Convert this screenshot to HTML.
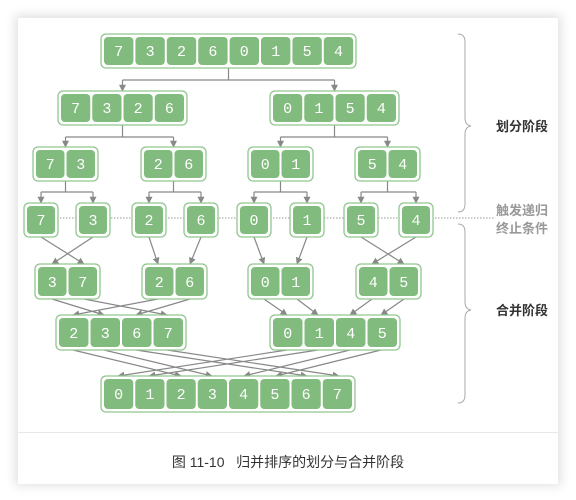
<!DOCTYPE html>
<html><head><meta charset="utf-8"><style>
html,body{margin:0;padding:0;background:#fff;width:576px;height:500px;overflow:hidden}
.card{position:absolute;left:18px;top:18px;width:540px;height:465px;background:#fff;box-shadow:0 0 10px 3px rgba(0,0,0,.12)}
.cap{position:absolute;left:0;top:414px;width:540px;height:51px;border-top:1px solid #e8e8e8;background:#fff;text-align:center;font:14px "Liberation Sans","Noto Sans CJK SC",sans-serif;color:#333;line-height:58px}
svg{position:absolute;left:0;top:0}
.o{fill:#fff;stroke:#92c68e;stroke-width:1.3}
.c{fill:#82bb7e}
.t{font:15px "Liberation Mono",monospace;fill:#fff;text-anchor:middle}
.l{stroke:#888;stroke-width:1.2;fill:none}
</style></head><body>
<div class="card"><div class="cap">图 11-10&nbsp;&nbsp;&nbsp;归并排序的划分与合并阶段</div></div>
<svg width="576" height="500" viewBox="0 0 576 500">
<defs><marker id="a" markerWidth="8" markerHeight="8" refX="4" refY="6" orient="auto" markerUnits="userSpaceOnUse"><path d="M0,0 L4,7 L8,0 Z" fill="#888" transform="rotate(-90 4 4)"/></marker>
<marker id="b" viewBox="0 0 10 10" refX="9" refY="5" markerWidth="7" markerHeight="7" orient="auto" markerUnits="userSpaceOnUse"><path d="M0,0 L10,5 L0,10 Z" fill="#888"/></marker></defs>
<!-- dotted line -->
<line x1="24" y1="218" x2="494" y2="218" stroke="#999" stroke-width="1" stroke-dasharray="1.5,1.5"/>
<!-- tree arrows -->
<g class="l">
<path d="M228.5,68 V80 M122.5,80 H334.5"/>
<path d="M122.5,80 V91" marker-end="url(#b)"/><path d="M334.5,80 V91" marker-end="url(#b)"/>
<path d="M122.5,125 V137 M65.5,137 H173.5 M334.5,125 V137 M280.5,137 H387.5"/>
<path d="M65.5,137 V147" marker-end="url(#b)"/><path d="M173.5,137 V147" marker-end="url(#b)"/>
<path d="M280.5,137 V147" marker-end="url(#b)"/><path d="M387.5,137 V147" marker-end="url(#b)"/>
<path d="M65.5,181 V192 M41,192 H93 M173.5,181 V192 M149,192 H201 M280.5,181 V192 M254,192 H307 M387.5,181 V192 M361,192 H416"/>
<path d="M41,192 V203" marker-end="url(#b)"/><path d="M93,192 V203" marker-end="url(#b)"/>
<path d="M149,192 V203" marker-end="url(#b)"/><path d="M201,192 V203" marker-end="url(#b)"/>
<path d="M254,192 V203" marker-end="url(#b)"/><path d="M307,192 V203" marker-end="url(#b)"/>
<path d="M361,192 V203" marker-end="url(#b)"/><path d="M416,192 V203" marker-end="url(#b)"/>
</g>
<g class="l" marker-end="url(#b)">
<path d="M41,237 L84,264"/><path d="M93,237 L52,264"/>
<path d="M149,237 L158,264"/><path d="M201,237 L190,264"/>
<path d="M254,237 L264,264"/><path d="M307,237 L297,264"/>
<path d="M361,237 L404,264"/><path d="M416,237 L372,264"/>
<path d="M52,299 L104,315"/><path d="M84,299 L167,315"/><path d="M158,299 L73,315"/><path d="M190,299 L136,315"/>
<path d="M264,299 L287,315"/><path d="M297,299 L318,315"/><path d="M372,299 L350,315"/><path d="M404,299 L381,315"/>
<path d="M73,350 L181,376"/><path d="M104,350 L212,376"/><path d="M136,350 L307,376"/><path d="M167,350 L339,376"/>
<path d="M287,350 L118,376"/><path d="M318,350 L149,376"/><path d="M350,350 L244,376"/><path d="M381,350 L276,376"/>
</g>
<!-- boxes -->
<rect class="o" x="101" y="34" width="255" height="34" rx="5"/>
<g class="c"><rect x="104" y="37" width="29.4" height="28" rx="4"/><rect x="135.4" y="37" width="29.4" height="28" rx="4"/><rect x="166.8" y="37" width="29.4" height="28" rx="4"/><rect x="198.2" y="37" width="29.4" height="28" rx="4"/><rect x="229.6" y="37" width="29.4" height="28" rx="4"/><rect x="261" y="37" width="29.4" height="28" rx="4"/><rect x="292.4" y="37" width="29.4" height="28" rx="4"/><rect x="323.8" y="37" width="29.4" height="28" rx="4"/></g>
<g class="t"><text x="118.7" y="56">7</text><text x="150.1" y="56">3</text><text x="181.5" y="56">2</text><text x="212.9" y="56">6</text><text x="244.3" y="56">0</text><text x="275.7" y="56">1</text><text x="307.1" y="56">5</text><text x="338.5" y="56">4</text></g>

<rect class="o" x="58" y="91" width="129" height="34" rx="5"/><rect class="o" x="270" y="91" width="129" height="34" rx="5"/>
<g class="c"><rect x="61" y="94" width="29.25" height="28" rx="4"/><rect x="92.25" y="94" width="29.25" height="28" rx="4"/><rect x="123.5" y="94" width="29.25" height="28" rx="4"/><rect x="154.75" y="94" width="29.25" height="28" rx="4"/>
<rect x="273" y="94" width="29.25" height="28" rx="4"/><rect x="304.25" y="94" width="29.25" height="28" rx="4"/><rect x="335.5" y="94" width="29.25" height="28" rx="4"/><rect x="366.75" y="94" width="29.25" height="28" rx="4"/></g>
<g class="t"><text x="75.6" y="113">7</text><text x="106.9" y="113">3</text><text x="138.1" y="113">2</text><text x="169.4" y="113">6</text><text x="287.6" y="113">0</text><text x="318.9" y="113">1</text><text x="350.1" y="113">5</text><text x="381.4" y="113">4</text></g>

<g class="o"><rect x="33" y="147" width="65" height="34" rx="5"/><rect x="141" y="147" width="65" height="34" rx="5"/><rect x="248" y="147" width="65" height="34" rx="5"/><rect x="355" y="147" width="65" height="34" rx="5"/></g>
<g class="c"><rect x="36" y="150" width="28.5" height="28" rx="4"/><rect x="66.5" y="150" width="28.5" height="28" rx="4"/><rect x="144" y="150" width="28.5" height="28" rx="4"/><rect x="174.5" y="150" width="28.5" height="28" rx="4"/><rect x="251" y="150" width="28.5" height="28" rx="4"/><rect x="281.5" y="150" width="28.5" height="28" rx="4"/><rect x="358" y="150" width="28.5" height="28" rx="4"/><rect x="388.5" y="150" width="28.5" height="28" rx="4"/></g>
<g class="t"><text x="50.2" y="169">7</text><text x="80.7" y="169">3</text><text x="158.2" y="169">2</text><text x="188.7" y="169">6</text><text x="265.2" y="169">0</text><text x="295.7" y="169">1</text><text x="372.2" y="169">5</text><text x="402.7" y="169">4</text></g>

<g class="o"><rect x="24" y="203" width="34" height="34" rx="5"/><rect x="76" y="203" width="34" height="34" rx="5"/><rect x="132" y="203" width="34" height="34" rx="5"/><rect x="184" y="203" width="34" height="34" rx="5"/><rect x="237" y="203" width="34" height="34" rx="5"/><rect x="290" y="203" width="34" height="34" rx="5"/><rect x="344" y="203" width="34" height="34" rx="5"/><rect x="399" y="203" width="34" height="34" rx="5"/></g>
<g class="c"><rect x="27" y="206" width="28" height="28" rx="4"/><rect x="79" y="206" width="28" height="28" rx="4"/><rect x="135" y="206" width="28" height="28" rx="4"/><rect x="187" y="206" width="28" height="28" rx="4"/><rect x="240" y="206" width="28" height="28" rx="4"/><rect x="293" y="206" width="28" height="28" rx="4"/><rect x="347" y="206" width="28" height="28" rx="4"/><rect x="402" y="206" width="28" height="28" rx="4"/></g>
<g class="t"><text x="41" y="225">7</text><text x="93" y="225">3</text><text x="149" y="225">2</text><text x="201" y="225">6</text><text x="254" y="225">0</text><text x="307" y="225">1</text><text x="361" y="225">5</text><text x="416" y="225">4</text></g>

<g class="o"><rect x="35" y="264" width="65" height="35" rx="5"/><rect x="142" y="264" width="65" height="35" rx="5"/><rect x="248" y="264" width="65" height="35" rx="5"/><rect x="356" y="264" width="65" height="35" rx="5"/></g>
<g class="c"><rect x="38" y="267" width="28.5" height="29" rx="4"/><rect x="68.5" y="267" width="28.5" height="29" rx="4"/><rect x="145" y="267" width="28.5" height="29" rx="4"/><rect x="175.5" y="267" width="28.5" height="29" rx="4"/><rect x="251" y="267" width="28.5" height="29" rx="4"/><rect x="281.5" y="267" width="28.5" height="29" rx="4"/><rect x="359" y="267" width="28.5" height="29" rx="4"/><rect x="389.5" y="267" width="28.5" height="29" rx="4"/></g>
<g class="t"><text x="52.2" y="287">3</text><text x="82.7" y="287">7</text><text x="159.2" y="287">2</text><text x="189.7" y="287">6</text><text x="265.2" y="287">0</text><text x="295.7" y="287">1</text><text x="373.2" y="287">4</text><text x="403.7" y="287">5</text></g>

<rect class="o" x="56" y="315" width="130" height="35" rx="5"/><rect class="o" x="270" y="315" width="130" height="35" rx="5"/>
<g class="c"><rect x="59" y="318" width="29.5" height="29" rx="4"/><rect x="90.5" y="318" width="29.5" height="29" rx="4"/><rect x="122" y="318" width="29.5" height="29" rx="4"/><rect x="153.5" y="318" width="29.5" height="29" rx="4"/>
<rect x="273" y="318" width="29.5" height="29" rx="4"/><rect x="304.5" y="318" width="29.5" height="29" rx="4"/><rect x="336" y="318" width="29.5" height="29" rx="4"/><rect x="367.5" y="318" width="29.5" height="29" rx="4"/></g>
<g class="t"><text x="73.7" y="338">2</text><text x="105.2" y="338">3</text><text x="136.7" y="338">6</text><text x="168.2" y="338">7</text><text x="287.7" y="338">0</text><text x="319.2" y="338">1</text><text x="350.7" y="338">4</text><text x="382.2" y="338">5</text></g>

<rect class="o" x="101" y="376" width="254" height="36" rx="5"/>
<g class="c"><rect x="104" y="379" width="29.25" height="30" rx="4"/><rect x="135.25" y="379" width="29.25" height="30" rx="4"/><rect x="166.5" y="379" width="29.25" height="30" rx="4"/><rect x="197.75" y="379" width="29.25" height="30" rx="4"/><rect x="229" y="379" width="29.25" height="30" rx="4"/><rect x="260.25" y="379" width="29.25" height="30" rx="4"/><rect x="291.5" y="379" width="29.25" height="30" rx="4"/><rect x="322.75" y="379" width="29.25" height="30" rx="4"/></g>
<g class="t"><text x="118.6" y="399">0</text><text x="149.9" y="399">1</text><text x="181.1" y="399">2</text><text x="212.4" y="399">3</text><text x="243.6" y="399">4</text><text x="274.9" y="399">5</text><text x="306.1" y="399">6</text><text x="337.4" y="399">7</text></g>

<!-- braces -->
<g fill="none" stroke="#aaa" stroke-width="1">
<path d="M458,34 Q465,34 465,42 V118 Q465,125 471,126 Q465,127 465,134 V204 Q465,212 458,212"/>
<path d="M458,224 Q465,224 465,232 V302 Q465,309 471,310 Q465,311 465,318 V395 Q465,403 458,403"/>
</g>
<g font-family="Liberation Sans,Noto Sans CJK SC,sans-serif" font-size="13" font-weight="bold">
<text x="496" y="131" fill="#333">划分阶段</text>
<text x="496" y="215" fill="#999">触发递归</text>
<text x="496" y="233" fill="#999">终止条件</text>
<text x="496" y="315" fill="#333">合并阶段</text>
</g>
</svg>
</body></html>
